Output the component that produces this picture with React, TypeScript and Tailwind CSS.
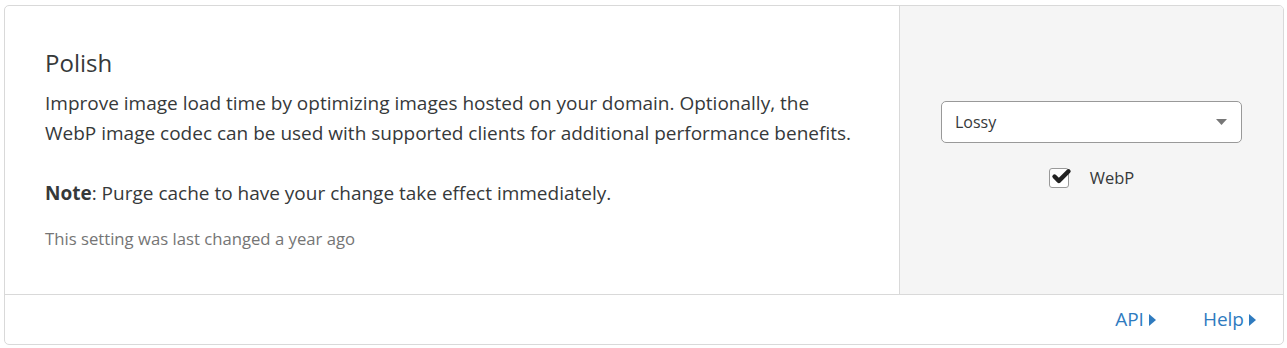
import { Check } from 'lucide-react';

// Setting card: description on the left, control panel on the right, links in the footer.
function Caret() {
  return (
    <svg width="7" height="12" viewBox="0 0 7 12" className="ml-[5px] inline-block">
      <path d="M0 0 L7 6 L0 12 Z" fill="#2f7bbf" />
    </svg>
  );
}

export default function App() {
  return (
    <div className="min-h-[348px] bg-white pl-[4px] pt-[5px]" style={{ fontFamily: '"Open Sans", "Noto Sans", sans-serif' }}>
      <div className="w-[1280px] overflow-hidden rounded-[5px] border border-[#d9d9d9] text-[#36393a]">
        <div className="flex h-[288px]">
          <div className="flex-1 px-[40px] pt-[42px]">
            <h2 className="text-[24px] font-medium leading-[30px] text-[#36393a]">Polish</h2>
            <p className="mt-[10px] text-[19px] leading-[30px]">
              Improve image load time by optimizing images hosted on your domain. Optionally, the
              <br />
              WebP image codec can be used with supported clients for additional performance benefits.
            </p>
            <p className="mt-[30px] text-[19px] leading-[30px]">
              <strong className="font-bold">Note</strong>: Purge cache to have your change take effect immediately.
            </p>
            <p className="mt-[21px] text-[16.7px] leading-[20px] text-[#757575]">This setting was last changed a year ago</p>
          </div>
          <div className="flex w-[384px] flex-col items-center border-l border-[#d9d9d9] bg-[#f5f5f5] pt-[95px]">
            <div className="flex h-[42px] w-[301px] items-center justify-between rounded-[5px] border border-[#999] bg-white pl-[13px] pr-[14px] text-[16px] text-[#36393a]">
              <span>Lossy</span>
              <svg width="11" height="6" viewBox="0 0 11 6">
                <path d="M0 0 H11 L5.5 6 Z" fill="#777" />
              </svg>
            </div>
            <label className="mt-[23px] flex items-center text-[16.5px] text-[#36393a]">
              <span className="relative flex h-[20px] w-[20px] items-center justify-center rounded-[3px] border border-[#999] bg-white">
                <Check className="absolute -top-[3px] left-[1px] h-[21px] w-[21px] text-[#222]" strokeWidth={5} />
              </span>
              <span className="ml-[21px]">WebP</span>
            </label>
          </div>
        </div>
        <div className="flex h-[50px] items-center justify-end gap-[47px] border-t border-[#d9d9d9] pr-[27px] text-[19px] text-[#2f7bbf]">
          <a className="flex items-center">API<Caret /></a>
          <a className="flex items-center">Help<Caret /></a>
        </div>
      </div>
    </div>
  );
}
